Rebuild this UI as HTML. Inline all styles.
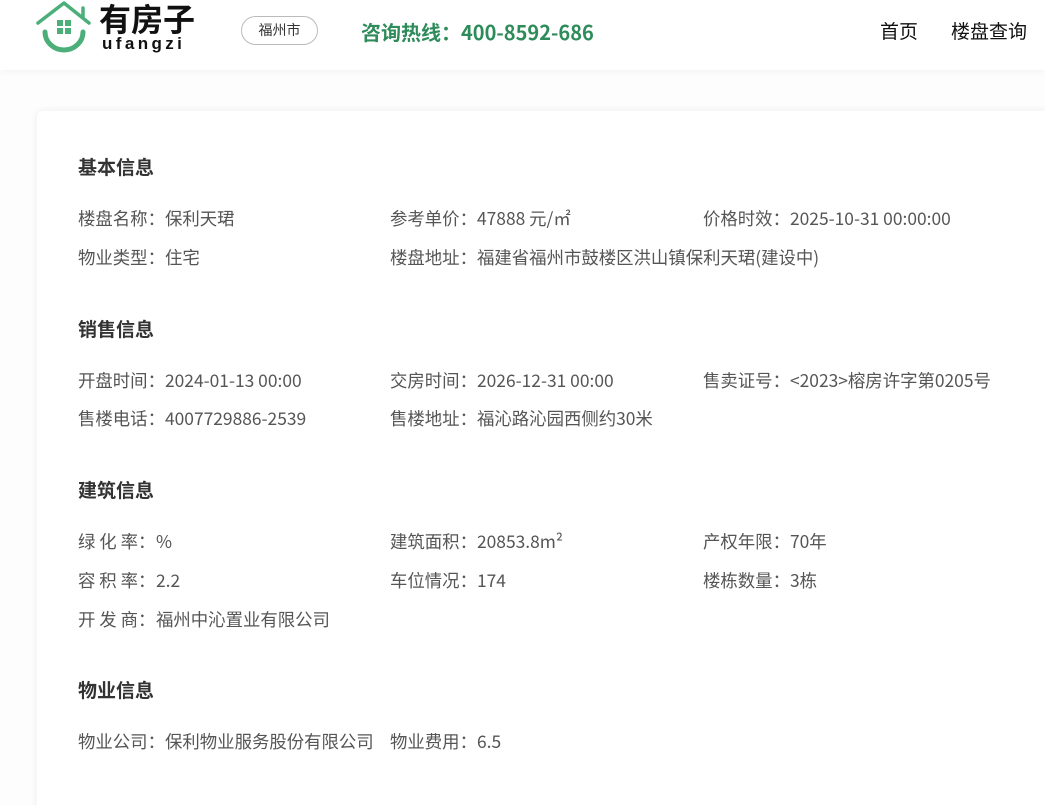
<!DOCTYPE html>
<html><head><meta charset="utf-8"><style>
*{margin:0;padding:0;box-sizing:border-box}
html,body{width:1045px;height:805px;overflow:hidden}
body{background:#fdfdfe;font-family:"Noto Sans CJK SC","Liberation Sans",sans-serif;position:relative}
.hdr{position:absolute;left:0;top:0;width:1045px;height:70px;background:#fff;box-shadow:0 2px 6px rgba(0,0,0,0.04)}
.a{position:absolute;white-space:nowrap}
.card{position:absolute;left:37px;top:111px;width:1020px;height:720px;background:#fff;border-radius:6px;box-shadow:0 0 8px rgba(0,0,0,0.07)}
.h{position:absolute;left:78px;font-size:19px;font-weight:bold;color:#333;line-height:24px}
.t{position:absolute;font-size:17.4px;color:#555;line-height:22px;white-space:nowrap}
.t b{font-weight:normal;display:inline-block;width:87px}
</style></head><body>
<div class="hdr"></div>
<svg class="a" style="left:30px;top:0" width="70" height="60" viewBox="30 0 70 60">
<path d="M38 23 L64 3 L89 23 M83 8 L83 17" fill="none" stroke="#4caf7a" stroke-width="3.5" stroke-linecap="round" stroke-linejoin="round"/>
<path d="M45 32 A19 18 0 0 0 83 32" fill="none" stroke="#4caf7a" stroke-width="5" stroke-linecap="round"/>
<rect x="57" y="20" width="6" height="6" fill="#4caf7a"/><rect x="65" y="20" width="6" height="6" fill="#4caf7a"/>
<rect x="57" y="28" width="6" height="6" fill="#4caf7a"/><rect x="65" y="28" width="6" height="6" fill="#4caf7a"/>
</svg>
<div class="a" style="left:99px;top:-2px;font-size:32px;font-weight:bold;color:#111;line-height:40px">有房子</div>
<div class="a" style="left:102px;top:36px;font-family:'Liberation Sans',sans-serif;font-size:17px;font-weight:bold;color:#111;line-height:16px;letter-spacing:3.4px">ufangzi</div>
<div class="a" style="left:241px;top:16px;width:77px;height:29px;border:1px solid #bbb;border-radius:15px;font-size:14px;color:#333;text-align:center;line-height:27px">福州市</div>
<div class="a" style="left:361px;top:18px;font-size:20px;font-weight:bold;color:#2e8b5a;line-height:28px">咨询热线：400-8592-686</div>
<div class="a" style="left:880px;top:18px;font-size:19px;color:#111;line-height:26px">首页</div>
<div class="a" style="left:951px;top:18px;font-size:19px;color:#111;line-height:26px">楼盘查询</div>
<div class="card"></div>
<div class="h" style="top:155px">基本信息</div>
<div class="t" style="left:78px;top:208px"><b>楼盘名称：</b>保利天珺</div>
<div class="t" style="left:390px;top:208px"><b>参考单价：</b>47888 元/㎡</div>
<div class="t" style="left:703px;top:208px"><b>价格时效：</b>2025-10-31 00:00:00</div>
<div class="t" style="left:78px;top:247px"><b>物业类型：</b>住宅</div>
<div class="t" style="left:390px;top:247px"><b>楼盘地址：</b>福建省福州市鼓楼区洪山镇保利天珺(建设中)</div>
<div class="h" style="top:317px">销售信息</div>
<div class="t" style="left:78px;top:370px"><b>开盘时间：</b>2024-01-13 00:00</div>
<div class="t" style="left:390px;top:370px"><b>交房时间：</b>2026-12-31 00:00</div>
<div class="t" style="left:703px;top:370px"><b>售卖证号：</b>&lt;2023&gt;榕房许字第0205号</div>
<div class="t" style="left:78px;top:408px"><b>售楼电话：</b>4007729886-2539</div>
<div class="t" style="left:390px;top:408px"><b>售楼地址：</b>福沁路沁园西侧约30米</div>
<div class="h" style="top:478px">建筑信息</div>
<div class="t" style="left:78px;top:531px"><b style="width:78px">绿 化 率：</b>%</div>
<div class="t" style="left:390px;top:531px"><b>建筑面积：</b>20853.8m²</div>
<div class="t" style="left:703px;top:531px"><b>产权年限：</b>70年</div>
<div class="t" style="left:78px;top:570px"><b style="width:78px">容 积 率：</b>2.2</div>
<div class="t" style="left:390px;top:570px"><b>车位情况：</b>174</div>
<div class="t" style="left:703px;top:570px"><b>楼栋数量：</b>3栋</div>
<div class="t" style="left:78px;top:609px"><b style="width:78px">开 发 商：</b>福州中沁置业有限公司</div>
<div class="h" style="top:678px">物业信息</div>
<div class="t" style="left:78px;top:731px"><b>物业公司：</b>保利物业服务股份有限公司</div>
<div class="t" style="left:390px;top:731px"><b>物业费用：</b>6.5</div>
</body></html>
